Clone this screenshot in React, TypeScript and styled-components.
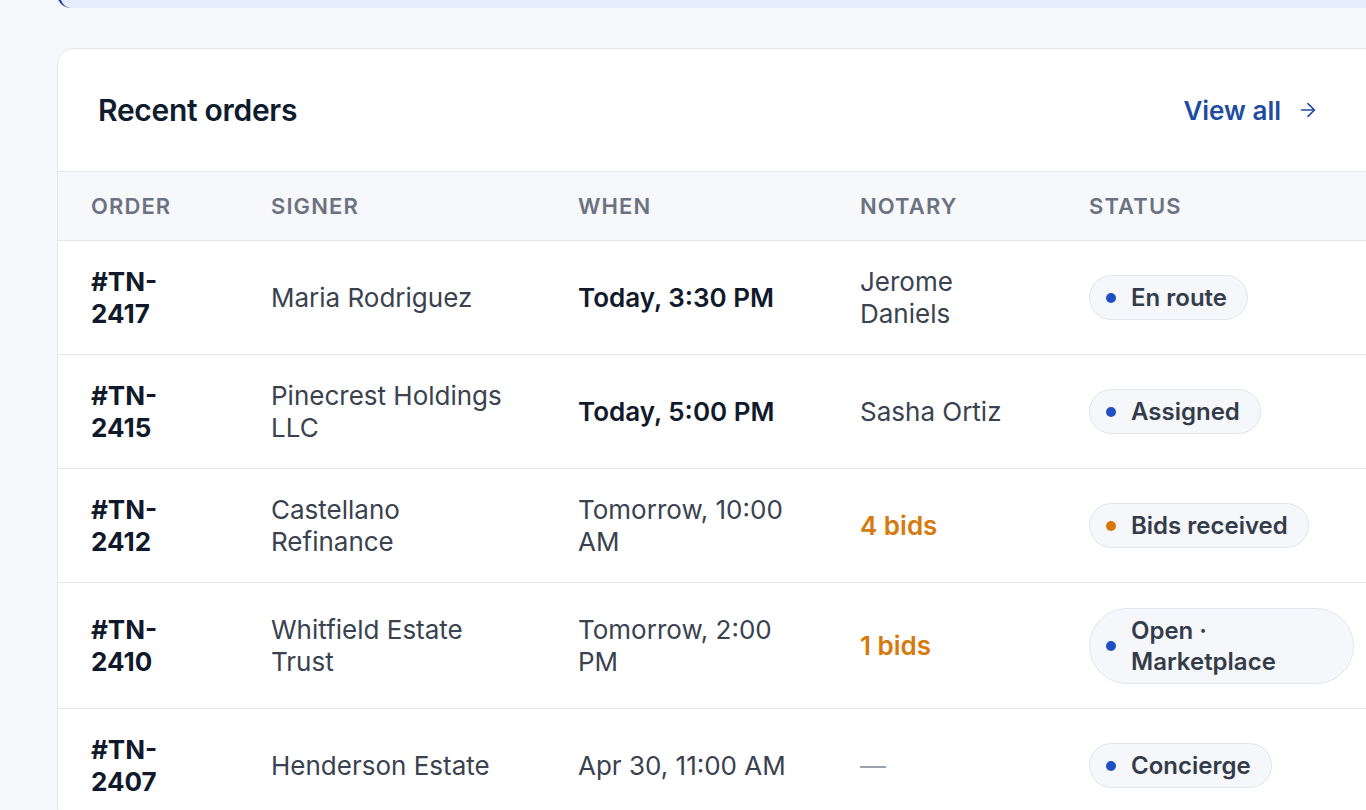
import React from "react";
import styled, { createGlobalStyle } from "styled-components";
import { ArrowRight } from "lucide-react";

const GlobalStyle = createGlobalStyle`
  html, body {
    margin: 0;
    padding: 0;
    background: #f6f8fc;
    overflow: hidden;
  }
  body {
    font-family: Inter, "Liberation Sans", sans-serif;
    color: #374151;
  }
  * {
    box-sizing: border-box;
  }
`;

type Tone = "blue" | "orange";

type Order = {
  id: string;
  signer: string;
  when: string;
  soon?: boolean;
  notary: string;
  bids?: boolean;
  status: string;
  tone: Tone;
};

const orders: Order[] = [
  { id: "#TN-2417", signer: "Maria Rodriguez", when: "Today, 3:30 PM", soon: true, notary: "Jerome Daniels", status: "En route", tone: "blue" },
  { id: "#TN-2415", signer: "Pinecrest Holdings LLC", when: "Today, 5:00 PM", soon: true, notary: "Sasha Ortiz", status: "Assigned", tone: "blue" },
  { id: "#TN-2412", signer: "Castellano Refinance", when: "Tomorrow, 10:00 AM", notary: "4 bids", bids: true, status: "Bids received", tone: "orange" },
  { id: "#TN-2410", signer: "Whitfield Estate Trust", when: "Tomorrow, 2:00 PM", notary: "1 bids", bids: true, status: "Open · Marketplace", tone: "blue" },
  { id: "#TN-2407", signer: "Henderson Estate", when: "Apr 30, 11:00 AM", notary: "—", status: "Concierge", tone: "blue" },
];

const App = () => {
  return (
    <Page>
      <GlobalStyle />
      <Notice />
      <Card>
        <CardHeader>
          <Title>Recent orders</Title>
          <ViewAll href="#">
            View all <ArrowRight size={22} strokeWidth={1.8} />
          </ViewAll>
        </CardHeader>
        <Table>
          <HeadRow>
            <HeadCell>Order</HeadCell>
            <HeadCell>Signer</HeadCell>
            <HeadCell>When</HeadCell>
            <HeadCell>Notary</HeadCell>
            <HeadCell>Status</HeadCell>
          </HeadRow>
          {orders.map((o) => (
            <Row key={o.id}>
              <IdCell>{o.id}</IdCell>
              <Cell>{o.signer}</Cell>
              <Cell $strong={o.soon}>{o.when}</Cell>
              <Cell $tone={o.bids ? "bids" : o.notary === "—" ? "muted" : undefined}>
                {o.notary}
              </Cell>
              <Cell>
                <Badge>
                  <Dot $tone={o.tone} />
                  <span>{o.status}</span>
                </Badge>
              </Cell>
            </Row>
          ))}
        </Table>
      </Card>
    </Page>
  );
};

const Page = styled.main`
  padding: 0 0 40px 57px;
  width: 1440px;
`;

const Notice = styled.div`
  height: 60px;
  margin-top: -52px;
  margin-bottom: 40px;
  background: #e6eefc;
  border-left: 3px solid #1e44a8;
  border-radius: 14px;
`;

const Card = styled.section`
  width: 1331px;
  background: #ffffff;
  border: 1px solid #e3e6ec;
  border-radius: 16px;
  overflow: hidden;
`;

const CardHeader = styled.header`
  display: flex;
  align-items: center;
  justify-content: space-between;
  height: 122px;
  padding: 0 68px 0 40px;
`;

const Title = styled.h2`
  margin: 0;
  font-size: 30px;
  font-weight: 600;
  color: #0f1c2e;
  letter-spacing: -0.01em;
`;

const ViewAll = styled.a`
  display: flex;
  align-items: center;
  gap: 16px;
  font-size: 26px;
  font-weight: 600;
  color: #1e4c9e;
  text-decoration: none;
`;

const Table = styled.div`
  display: grid;
  grid-template-columns: 180px 307px 282px 229px 1fr;
`;

const HeadRow = styled.div`
  display: contents;
`;

const HeadCell = styled.div`
  height: 70px;
  display: flex;
  align-items: center;
  padding: 0 33px;
  background: #f7f8fb;
  border-top: 1px solid #e3e6ec;
  border-bottom: 1px solid #e3e6ec;
  font-size: 22px;
  font-weight: 600;
  letter-spacing: 0.05em;
  text-transform: uppercase;
  color: #6b7280;
`;

const Row = styled.div`
  display: contents;
`;

const Cell = styled.div<{ $strong?: boolean; $tone?: "bids" | "muted" }>`
  display: flex;
  align-items: center;
  padding: 24.5px 33px;
  border-bottom: 1px solid #e5e7eb;
  font-size: 26px;
  line-height: 32px;
  font-weight: ${(p) => (p.$strong || p.$tone === "bids" ? 600 : 400)};
  color: ${(p) =>
    p.$tone === "bids"
      ? "#d67a0e"
      : p.$tone === "muted"
      ? "#9aa1ac"
      : p.$strong
      ? "#111a2b"
      : "#3a4250"};
`;

const IdCell = styled(Cell)`
  font-weight: 700;
  color: #111a2b;
`;

const Badge = styled.span`
  display: inline-flex;
  align-items: center;
  gap: 15px;
  padding: 6px 20px 6px 16px;
  background: #f5f7fb;
  border: 1px solid #e1e5eb;
  border-radius: 999px;
  font-size: 24px;
  line-height: 31px;
  font-weight: 600;
  color: #343c4a;
`;

const Dot = styled.i<{ $tone: Tone }>`
  flex: none;
  width: 10px;
  height: 10px;
  border-radius: 50%;
  background: ${(p) => (p.$tone === "orange" ? "#d97706" : "#1f4fc1")};
`;

export default App;
